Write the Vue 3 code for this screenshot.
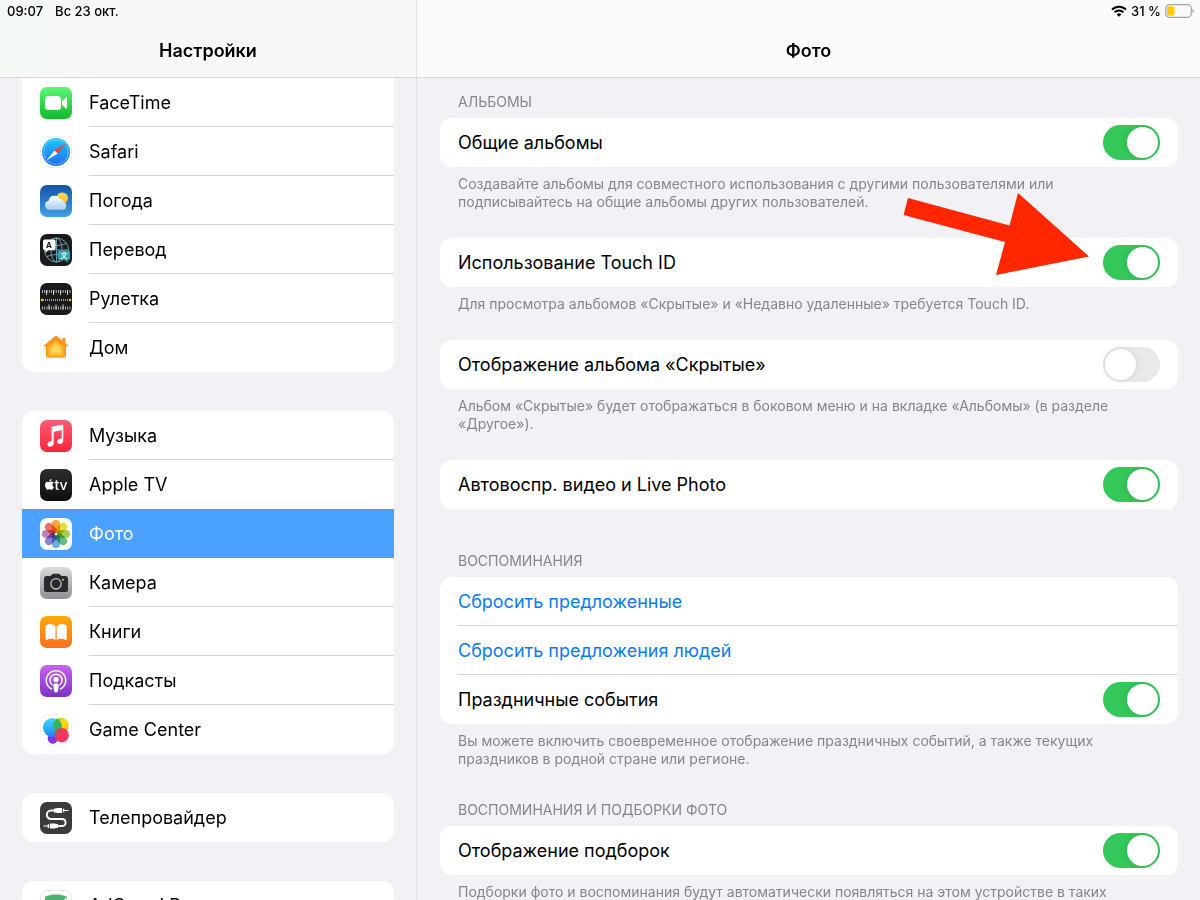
<template>
  <div class="settings">
    <!-- 图标定义 -->
    <svg class="sprite" aria-hidden="true">
      <defs>
        <linearGradient id="g-green" x1="0" y1="0" x2="0" y2="1">
          <stop offset="0" stop-color="#5df777" />
          <stop offset="1" stop-color="#0abc28" />
        </linearGradient>
        <linearGradient id="g-safari" x1="0" y1="0" x2="0" y2="1">
          <stop offset="0" stop-color="#1bc8fb" />
          <stop offset="1" stop-color="#1f6cf2" />
        </linearGradient>
        <linearGradient id="g-sky" x1="0" y1="0" x2="0" y2="1">
          <stop offset="0" stop-color="#1353a8" />
          <stop offset="1" stop-color="#3fa1e6" />
        </linearGradient>
        <linearGradient id="g-cloud" x1="0" y1="0" x2="0" y2="1">
          <stop offset="0" stop-color="#ffffff" />
          <stop offset="1" stop-color="#a9cdf0" />
        </linearGradient>
        <linearGradient id="g-sun" x1="0" y1="0" x2="0" y2="1">
          <stop offset="0" stop-color="#ffe14d" />
          <stop offset="1" stop-color="#f7b733" />
        </linearGradient>
        <linearGradient id="g-home" x1="0" y1="0" x2="0" y2="1">
          <stop offset="0" stop-color="#fc8f15" />
          <stop offset="1" stop-color="#fda61e" />
        </linearGradient>
        <linearGradient id="g-music" x1="0" y1="0" x2="0" y2="1">
          <stop offset="0" stop-color="#fb5c74" />
          <stop offset="1" stop-color="#fa233b" />
        </linearGradient>
        <linearGradient id="g-black" x1="0" y1="0" x2="0" y2="1">
          <stop offset="0" stop-color="#2e2e2f" />
          <stop offset="1" stop-color="#0d0d0e" />
        </linearGradient>
        <linearGradient id="g-gray" x1="0" y1="0" x2="0" y2="1">
          <stop offset="0" stop-color="#dbdbde" />
          <stop offset="1" stop-color="#8e8e93" />
        </linearGradient>
        <linearGradient id="g-books" x1="0" y1="0" x2="0" y2="1">
          <stop offset="0" stop-color="#ffaa06" />
          <stop offset="1" stop-color="#fb6e1e" />
        </linearGradient>
        <linearGradient id="g-pod" x1="0" y1="0" x2="0" y2="1">
          <stop offset="0" stop-color="#c764ee" />
          <stop offset="1" stop-color="#7d32c4" />
        </linearGradient>
        <linearGradient id="g-gc-blue" x1="0" y1="0" x2="0" y2="1">
          <stop offset="0" stop-color="#45d8f6" />
          <stop offset="1" stop-color="#1b86f7" />
        </linearGradient>
        <linearGradient id="g-gc-yellow" x1="0" y1="0" x2="1" y2="1">
          <stop offset="0" stop-color="#8fd02c" />
          <stop offset="0.5" stop-color="#fbdc0c" />
          <stop offset="1" stop-color="#fba51c" />
        </linearGradient>
        <linearGradient id="g-gc-green" x1="0" y1="0" x2="0" y2="1">
          <stop offset="0" stop-color="#3db64a" />
          <stop offset="1" stop-color="#3aa68a" />
        </linearGradient>
        <clipPath id="c-gc"><circle cx="12.5" cy="12" r="9" /></clipPath>
      </defs>

      <symbol id="i-facetime" viewBox="0 0 32 32">
        <rect width="32" height="32" rx="7" fill="url(#g-green)" />
        <rect x="5" y="9" width="16" height="14" rx="3.5" fill="#fff" />
        <path d="M22 14.2l3.8-3.6c.6-.5 1.2-.3 1.2.5v9.8c0 .8-.6 1-1.2.5L22 17.8z" fill="#fff" />
      </symbol>

      <symbol id="i-safari" viewBox="0 0 32 32">
        <rect x=".5" y=".5" width="31" height="31" rx="7" fill="#fff" stroke="#efeff1" />
        <circle cx="16" cy="16" r="14" fill="url(#g-safari)" />
        <circle cx="16" cy="16" r="12.2" fill="none" stroke="#bfe5ff" stroke-width="1.4" stroke-dasharray=".5 1.1" />
        <path d="M26 7.5L17.6 17.6 14.4 14.4z" fill="#ff3b30" />
        <path d="M6.5 24.5l7.9-10.1 3.2 3.2z" fill="#fff" />
      </symbol>

      <symbol id="i-weather" viewBox="0 0 32 32">
        <rect width="32" height="32" rx="7" fill="url(#g-sky)" />
        <circle cx="22.2" cy="13.2" r="5.8" fill="url(#g-sun)" />
        <path d="M9.5 24.8a4.6 4.6 0 0 1-.8-9.1 5.8 5.8 0 0 1 10.9-1.9 4.4 4.4 0 0 1 4 3.4 3.9 3.9 0 0 1-1 7.6z" fill="url(#g-cloud)" />
      </symbol>

      <symbol id="i-translate" viewBox="0 0 32 32">
        <rect width="32" height="32" rx="7" fill="#1b1b1d" />
        <g fill="none" stroke="#6b9fa9" stroke-width="1">
          <circle cx="16.5" cy="16" r="12" />
          <ellipse cx="16.5" cy="16" rx="5.6" ry="12" />
          <path d="M16.5 4v24M4.5 16h24M7 9.5q9.5 4 19 0M7 22.5q9.5-4 19 0" />
        </g>
        <path d="M4.8 5.500h9a1.800 1.800 0 0 1 1.800 1.800v7a1.800 1.800 0 0 1-1.800 1.800H8.500L5.500 19v-2.900h-.7A1.800 1.800 0 0 1 3 14.300v-7a1.800 1.800 0 0 1 1.800-1.800z" fill="#fff" />
        <path d="M19.500 16.500h8.700a1.800 1.800 0 0 1 1.800 1.800v6a1.800 1.800 0 0 1-1.800 1.800h-.6v2.700l-3-2.700h-5.100a1.800 1.800 0 0 1-1.800-1.800v-6a1.800 1.800 0 0 1 1.800-1.800z" fill="#2fa8bd" />
      </symbol>

      <symbol id="i-measure" viewBox="0 0 32 32">
        <rect width="32" height="32" rx="7" fill="#1a1a1c" />
        <g stroke="#d6d6d8" fill="none">
          <path d="M2 8.5h29" stroke-width="3" stroke-dasharray=".8 1.5" />
          <path d="M6.5 7v5M13.5 7v5M20.5 7v5M27.5 7v5" stroke-width="1" />
          <path d="M2 25h29" stroke-width="3" stroke-dasharray=".8 1.5" />
          <path d="M9 21.5v5M16 21.5v5M23 21.5v5" stroke-width="1" />
        </g>
        <path d="M3 17h26" stroke="#f6cb12" stroke-width="1.6" stroke-dasharray="1 1" />
        <circle cx="2" cy="17" r="1.2" fill="#f6cb12" />
        <circle cx="30" cy="17" r="1.2" fill="#f6cb12" />
      </symbol>

      <symbol id="i-home" viewBox="0 0 32 32">
        <rect x=".5" y=".5" width="31" height="31" rx="7" fill="#fff" stroke="#f5f5f7" />
        <path d="M17 4.300L22.500 8.800V6h3v5.300l2.300 1.900c.7.600.3 1.300-.5 1.300H26v9.800a1.500 1.500 0 0 1-1.500 1.500h-17A1.500 1.500 0 0 1 6 24.300v-9.800H4.700c-.8 0-1.200-.7-.5-1.300L15 4.300c.6-.5 1.400-.5 2 0z" fill="url(#g-home)" />
        <path d="M16 9.200l6.800 5.800v8H9.200v-8z" fill="#febb35" stroke="#febb35" stroke-linejoin="round" />
        <path d="M16 12.500l4 3.500v4.800h-8V16z" fill="#ffd659" stroke="#ffd659" stroke-linejoin="round" />
      </symbol>

      <symbol id="i-music" viewBox="0 0 32 32">
        <rect width="32" height="32" rx="7" fill="url(#g-music)" />
        <path d="M11.600 8.200c0-.9.400-1.400 1.300-1.600l8.800-1.800c.9-.2 1.600.2 1.600 1.100v14.600c0 2-1.500 3.400-3.500 3.400-1.600 0-2.700-1-2.700-2.400s1-2.300 2.500-2.600l1.200-.3c.7-.1.900-.5.900-1.100v-6.700c0-.5-.3-.6-.7-.5l-6.600 1.400c-.5.100-.7.300-.7.700v10.700c0 2-1.500 3.600-3.600 3.600-1.600 0-2.700-1-2.700-2.400s1-2.300 2.500-2.700l1-.2c.5-.1.700-.4.700-.9z" fill="#fff" />
      </symbol>

      <symbol id="i-tv" viewBox="0 0 32 32">
        <rect width="32" height="32" rx="7" fill="url(#g-black)" />
        <path transform="translate(4 10) scale(.45)" fill="#fff" d="M12.152 6.896c-.948 0-2.415-1.078-3.960-1.040-2.040.027-3.910 1.183-4.961 3.014-2.117 3.675-.546 9.103 1.519 12.090 1.013 1.454 2.208 3.090 3.792 3.039 1.520-.065 2.090-.987 3.935-.987 1.831 0 2.350.987 3.960.948 1.637-.026 2.676-1.480 3.676-2.948 1.156-1.688 1.636-3.325 1.662-3.415-.039-.013-3.182-1.221-3.220-4.857-.026-3.040 2.480-4.494 2.597-4.559-1.429-2.090-3.623-2.324-4.390-2.376-2-.156-3.675 1.090-4.610 1.090zM15.530 3.830c.843-1.012 1.400-2.427 1.245-3.830-1.207.052-2.662.805-3.532 1.818-.780.896-1.454 2.338-1.273 3.714 1.338.104 2.715-.688 3.559-1.701" />
      </symbol>

      <symbol id="i-photos" viewBox="0 0 32 32">
        <rect width="32" height="32" rx="7" fill="#fff" />
        <g class="petals">
          <rect
            v-for="(color, i) in petals"
            :key="color"
            x="12"
            y="2"
            width="8"
            height="13"
            rx="4"
            :fill="color"
            :transform="`rotate(${i * 45} 16 16)`"
          />
        </g>
      </symbol>

      <symbol id="i-camera" viewBox="0 0 32 32">
        <rect width="32" height="32" rx="7" fill="url(#g-gray)" />
        <path d="M6.500 9h4l1.500-1.600c.5-.5.900-.7 1.600-.7h4.800c.7 0 1.100.2 1.600.700L21.500 9h4A2.500 2.500 0 0 1 28 11.500v11a2.500 2.500 0 0 1-2.500 2.500h-19A2.500 2.500 0 0 1 4 22.500v-11A2.500 2.500 0 0 1 6.500 9z" fill="#2a2a2c" />
        <circle cx="16" cy="16.800" r="5.200" fill="#2a2a2c" stroke="#c3c3c6" stroke-width="1.300" />
        <circle cx="23" cy="12.800" r="1" fill="#f5c518" />
      </symbol>

      <symbol id="i-books" viewBox="0 0 32 32">
        <rect width="32" height="32" rx="7" fill="url(#g-books)" />
        <path d="M15.500 10.500v13.700c-2.300-1.900-6-2-9.100-.1-.5.300-.9.100-.9-.5V10.600c0-.7.200-1.100.8-1.500 3.200-1.900 7-1.700 9.200 1.400z" fill="#fff" />
        <path d="M16.700 10.500v13.700c2.300-1.900 6-2 9.100-.1.500.3.900.1.900-.5V10.600c0-.7-.2-1.100-.8-1.500-3.200-1.900-7-1.700-9.200 1.400z" fill="#fff" />
      </symbol>

      <symbol id="i-podcasts" viewBox="0 0 32 32">
        <rect width="32" height="32" rx="7" fill="url(#g-pod)" />
        <g fill="none" stroke="#fff" stroke-width="1.500" stroke-linecap="round">
          <path d="M11.500 24a9.700 9.700 0 1 1 9 0" />
          <path d="M12 19.700a6 6 0 1 1 8 0" />
        </g>
        <circle cx="16" cy="14.500" r="2.700" fill="#fff" />
        <path d="M16 18.300c1.900 0 2.900.8 2.700 2.500l-.7 4.800c-.2 1.300-.8 1.800-2 1.800s-1.800-.5-2-1.800l-.7-4.800c-.2-1.700.8-2.500 2.700-2.500z" fill="#fff" />
      </symbol>

      <symbol id="i-gamecenter" viewBox="0 0 32 32">
        <rect x=".5" y=".5" width="31" height="31" rx="7" fill="#fff" stroke="#f5f5f7" />
        <circle cx="20.800" cy="11.500" r="7.800" fill="url(#g-gc-yellow)" />
        <circle cx="13" cy="23.800" r="5" fill="#9a3df0" />
        <circle cx="12.500" cy="13.500" r="9.500" fill="url(#g-gc-blue)" />
        <circle cx="20.800" cy="11.500" r="7.800" fill="url(#g-gc-green)" clip-path="url(#c-gc)" />
        <circle cx="21.700" cy="21.200" r="7.200" fill="#fb3560" />
        <path d="M14.600 20a7.200 7.200 0 0 1 7.300-6 9.500 9.500 0 0 1-4 7.700 9.500 9.500 0 0 1-3.300 1.300z" fill="#c54a58" />
        <path d="M8.200 22.200a9.500 9.500 0 0 0 6.500.6 7.200 7.200 0 0 0 2.500 4.100 5 5 0 0 1-9-4.700z" fill="#7a35ee" />
      </symbol>

      <symbol id="i-provider" viewBox="0 0 32 32">
        <rect width="32" height="32" rx="7" fill="#3b3b3d" />
        <path d="M14.500 8.500H11a4.200 4.200 0 0 0 0 8.400h11a3.600 3.600 0 0 1 0 7.200h-4.500" fill="none" stroke="#fff" stroke-width="2" />
        <path d="M14 6.500h2.500V6H22v5h-5.500v-.5H14zM22.800 6.700h1.500v3.600h-1.500zM24 8h4.500v1H24z" fill="#fff" />
        <path d="M18 26.100h-2.500v.5H10v-5h5.500v.5H18zM9.200 25.900H7.700v-3.600h1.500zM8 24.600H3.500v-1H8z" fill="#fff" />
      </symbol>

      <symbol id="i-adguard" viewBox="0 0 32 32">
        <rect x=".5" y=".5" width="31" height="31" rx="7" fill="#fff" stroke="#e9e9eb" />
        <path d="M16 4.500c3.500 0 7.700.6 11 2.300 0 5 .6 14.500-11 21.700C4.400 21.300 5 11.800 5 6.800c3.300-1.700 7.500-2.300 11-2.300z" fill="#4bb371" />
        <path d="M11 15l5 5.500L26.500 8.500" fill="none" stroke="#fff" stroke-width="2" />
      </symbol>
    </svg>

    <aside class="sidebar">
      <header class="bar bar-left">
        <div class="status">
          <span>09:07</span>
          <span>Вс 23 окт.</span>
        </div>
        <h1 class="title">Настройки</h1>
      </header>

      <nav class="menu">
        <ul v-for="(section, i) in menu" :key="i" class="card">
          <li v-for="item in section" :key="item.icon">
            <a
              href="#"
              class="menu-item"
              :class="{ active: item.icon === current }"
              @click.prevent="current = item.icon"
            >
              <svg class="icon" viewBox="0 0 32 32" aria-hidden="true">
                <use :href="`#i-${item.icon}`" />
                <text
                  v-for="g in item.glyphs"
                  :key="g.text"
                  :x="g.x"
                  :y="g.y"
                  :font-size="g.size"
                  :font-weight="g.weight"
                  :fill="g.color"
                  text-anchor="middle"
                >{{ g.text }}</text>
              </svg>
              <span class="menu-label">{{ item.label }}</span>
            </a>
          </li>
        </ul>
      </nav>
    </aside>

    <main class="content">
      <header class="bar bar-right">
        <div class="status status-right">
          <svg class="wifi" viewBox="0 0 16 12" aria-hidden="true">
            <g fill="none" stroke="#000" stroke-width="2">
              <path d="M1 4.600a10 10 0 0 1 14 0" />
              <path d="M3.600 7.300a6.300 6.300 0 0 1 8.800 0" />
            </g>
            <path d="M8 11.800L5.600 9.400a3.500 3.500 0 0 1 4.800 0z" />
          </svg>
          <span>31 %</span>
          <svg class="battery" viewBox="0 0 29 14" aria-hidden="true">
            <rect x=".7" y=".7" width="25.600" height="12.600" rx="3.800" fill="none" stroke="#a3a3a5" stroke-width="1.200" />
            <rect x="2" y="2.200" width="7.500" height="9.600" rx="2" fill="#fdcb00" />
            <path d="M27.500 4.800c1.800.8 1.800 3.600 0 4.400z" fill="#a3a3a5" />
          </svg>
        </div>
        <h2 class="title">Фото</h2>
      </header>

      <div class="groups">
        <section v-for="(group, i) in groups" :key="i" class="group" :class="{ 'no-note': !group.note }">
          <h3 v-if="group.title" class="group-title">{{ group.title }}</h3>
          <div class="card group-card">
            <div v-for="row in group.rows" :key="row.label" class="row">
              <button v-if="row.action" type="button" class="row-action">{{ row.label }}</button>
              <label v-else class="row-toggle">
                <span>{{ row.label }}</span>
                <input v-model="row.on" type="checkbox" role="switch" class="switch" />
              </label>
            </div>
            <svg v-if="group.arrow" class="arrow" viewBox="0 0 187 83" aria-hidden="true">
              <path d="M5 5L106.500 32.500 115 0 186 63.500 93 82 102 49 .5 22z" fill="#ff2600" />
            </svg>
          </div>
          <p v-if="group.note" class="note">{{ group.note }}</p>
        </section>
      </div>
    </main>
  </div>
</template>

<script setup>
import { ref, reactive } from 'vue'

// 当前选中的菜单项
const current = ref('photos')

// 左侧菜单
const menu = [
  [
    { icon: 'facetime', label: 'FaceTime' },
    { icon: 'safari', label: 'Safari' },
    { icon: 'weather', label: 'Погода' },
    {
      icon: 'translate',
      label: 'Перевод',
      glyphs: [
        { text: 'A', x: 9, y: 14, size: 8, weight: 700, color: '#1b1b1d' },
        { text: '文', x: 24, y: 24, size: 7, weight: 700, color: '#fff' }
      ]
    },
    { icon: 'measure', label: 'Рулетка' },
    { icon: 'home', label: 'Дом' }
  ],
  [
    { icon: 'music', label: 'Музыка' },
    {
      icon: 'tv',
      label: 'Apple TV',
      glyphs: [{ text: 'tv', x: 21, y: 21, size: 14, weight: 500, color: '#fff' }]
    },
    { icon: 'photos', label: 'Фото' },
    { icon: 'camera', label: 'Камера' },
    { icon: 'books', label: 'Книги' },
    { icon: 'podcasts', label: 'Подкасты' },
    { icon: 'gamecenter', label: 'Game Center' }
  ],
  [{ icon: 'provider', label: 'Телепровайдер' }],
  [{ icon: 'adguard', label: 'AdGuard Pro' }]
]

// 「照片」图标花瓣颜色，从顶部顺时针
const petals = ['#f9a11b', '#e5d61c', '#9ccb3b', '#52b57c', '#5aa5dc', '#7d74c4', '#b973b3', '#ee5f52']

// 右侧设置分组
const groups = reactive([
  {
    title: 'АЛЬБОМЫ',
    rows: [{ label: 'Общие альбомы', on: true }],
    note: 'Создавайте альбомы для совместного использования с другими пользователями или подписывайтесь на общие альбомы других пользователей.'
  },
  {
    arrow: true,
    rows: [{ label: 'Использование Touch ID', on: true }],
    note: 'Для просмотра альбомов «Скрытые» и «Недавно удаленные» требуется Touch ID.'
  },
  {
    rows: [{ label: 'Отображение альбома «Скрытые»', on: false }],
    note: 'Альбом «Скрытые» будет отображаться в боковом меню и на вкладке «Альбомы» (в разделе «Другое»).'
  },
  {
    rows: [{ label: 'Автовоспр. видео и Live Photo', on: true }]
  },
  {
    title: 'ВОСПОМИНАНИЯ',
    rows: [
      { label: 'Сбросить предложенные', action: true },
      { label: 'Сбросить предложения людей', action: true },
      { label: 'Праздничные события', on: true }
    ],
    note: 'Вы можете включить своевременное отображение праздничных событий, а также текущих праздников в родной стране или регионе.'
  },
  {
    title: 'ВОСПОМИНАНИЯ И ПОДБОРКИ ФОТО',
    rows: [{ label: 'Отображение подборок', on: true }],
    note: 'Подборки фото и воспоминания будут автоматически появляться на этом устройстве в таких'
  }
])
</script>

<style>
body {
  margin: 0;
  background: #f2f1f6;
}
</style>

<style scoped>
.settings {
  display: flex;
  height: 100vh;
  overflow: hidden;
  background: #f2f1f6;
  color: #000;
  font-family: Inter, "Liberation Sans", "Noto Sans CJK SC", sans-serif;
  font-size: 18px;
}

.sprite {
  position: absolute;
  width: 0;
  height: 0;
}

.petals rect {
  mix-blend-mode: multiply;
  opacity: 0.9;
}

.sidebar {
  flex: 0 0 416px;
  display: flex;
  flex-direction: column;
  border-right: 1px solid #e3e3e6;
}

.content {
  flex: 1;
  min-width: 0;
  display: flex;
  flex-direction: column;
}

/* 顶部栏 */
.bar {
  flex: none;
  box-sizing: border-box;
  height: 78px;
  border-bottom: 1px solid #d9d9dc;
}

.bar-left {
  background: linear-gradient(90deg, #f3f9f4, #f7f7f7 30%);
}

.bar-right {
  background: #fafafa;
}

.status {
  display: flex;
  align-items: center;
  gap: 12px;
  height: 22px;
  padding: 0 7px;
  font-size: 13px;
  font-weight: 500;
}

.status-right {
  justify-content: flex-end;
  gap: 4px;
  padding: 0 6px;
}

.wifi {
  width: 16px;
  height: 12px;
}

.battery {
  width: 29px;
  height: 14px;
}

.title {
  margin: 0;
  padding-top: 17px;
  font-size: 18px;
  font-weight: 600;
  line-height: 24px;
  text-align: center;
}

/* 左侧菜单 */
.menu {
  flex: 1;
  min-height: 0;
  overflow: hidden;
  display: flex;
  flex-direction: column;
  gap: 39px;
  padding: 0 22px;
}

.card {
  flex: none;
  margin: 0;
  padding: 0;
  list-style: none;
  background: #fff;
  border-radius: 12px;
}

.menu .card:first-child {
  border-radius: 0 0 12px 12px;
}

.menu-item {
  display: flex;
  align-items: center;
  gap: 17px;
  height: 49px;
  padding-left: 18px;
  color: inherit;
  text-decoration: none;
}

.icon {
  flex: none;
  width: 32px;
  height: 32px;
}

.menu-label {
  flex: 1;
  box-sizing: border-box;
  height: 49px;
  line-height: 50px;
  border-bottom: 1px solid #d4d4d6;
}

li:last-child .menu-label,
li:has(+ li .active) .menu-label,
.active .menu-label {
  border-color: transparent;
}

.menu-item.active {
  background: #4ba1ff;
  color: #fff;
}

/* 右侧设置 */
.groups {
  flex: 1;
  min-height: 0;
  overflow: hidden;
  padding: 9px 22px 0 23px;
}

.group {
  margin-bottom: 27px;
}

.group.no-note {
  margin-bottom: 37px;
}

.group-title {
  margin: 0;
  padding: 6px 18px 7px;
  color: #85858b;
  font-size: 14px;
  font-weight: 400;
  line-height: 18px;
}

.group-card {
  position: relative;
}

.row {
  margin-left: 18px;
}

.row + .row {
  box-shadow: 0 -1px 0 #d4d4d6;
}

.row-toggle {
  display: flex;
  align-items: center;
  justify-content: space-between;
  height: 49px;
  padding-right: 18px;
}

.row-action {
  display: block;
  width: 100%;
  height: 49px;
  padding: 0;
  border: 0;
  background: none;
  color: #0a7aff;
  font: inherit;
  text-align: left;
  cursor: pointer;
}

.switch {
  appearance: none;
  flex: none;
  position: relative;
  width: 57px;
  height: 35px;
  margin: 0;
  border-radius: 18px;
  background: #e9e9eb;
  cursor: pointer;
}

.switch::before {
  content: "";
  position: absolute;
  top: 2px;
  left: 2px;
  width: 31px;
  height: 31px;
  border-radius: 50%;
  background: #fff;
  box-shadow: 0 0 6px rgba(0, 0, 0, 0.12);
}

.switch:checked {
  background: #34c759;
}

.switch:checked::before {
  left: 24px;
}

.note {
  margin: 0;
  padding: 8px 18px 0;
  color: #85858b;
  font-size: 14px;
  line-height: 18px;
}

/* 指向开关的箭头 */
.arrow {
  position: absolute;
  top: -45px;
  right: 88px;
  width: 187px;
  height: 83px;
  pointer-events: none;
}
</style>
